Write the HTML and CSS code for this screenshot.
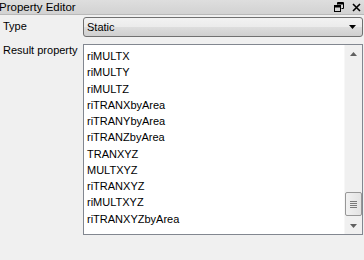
FILE: index.html
```html
<!DOCTYPE html>
<html lang="en">
<head>
    <meta charset="UTF-8">
    <link rel="stylesheet" href="styles.css">
</head>
<body>
    <div class="editor">
        <div class="title-bar">
            <span class="title">Property Editor</span>
            <span class="title-buttons">
                <svg width="10" height="10" viewBox="0 0 10 10">
                    <path d="M3.5 0.5h6v6h-2M3.5 0.5v2" fill="none" stroke="#000" stroke-width="1"/>
                    <rect x="3.5" y="1" width="6" height="1.5" fill="#000"/>
                    <rect x="0.5" y="3.5" width="6" height="6" fill="none" stroke="#000"/>
                    <rect x="0.5" y="4" width="6" height="1.5" fill="#000"/>
                </svg>
                <svg width="9" height="9" viewBox="0 0 9 9">
                    <path d="M1 1L8 8M8 1L1 8" stroke="#000" stroke-width="1.6"/>
                </svg>
            </span>
        </div>

        <div class="form">
            <label class="field-label">Type</label>
            <div class="combo">
                <span>Static</span>
                <svg width="7" height="4" viewBox="0 0 7 4"><path d="M0 0h7L3.5 4z" fill="#000"/></svg>
            </div>

            <label class="field-label">Result property</label>
            <div class="list">
                <ul class="items">
                    <li>riMULTX</li>
                    <li>riMULTY</li>
                    <li>riMULTZ</li>
                    <li>riTRANXbyArea</li>
                    <li>riTRANYbyArea</li>
                    <li>riTRANZbyArea</li>
                    <li>TRANXYZ</li>
                    <li>MULTXYZ</li>
                    <li>riTRANXYZ</li>
                    <li>riMULTXYZ</li>
                    <li>riTRANXYZbyArea</li>
                </ul>
                <div class="scrollbar">
                    <div class="arrow">
                        <svg width="7" height="4" viewBox="0 0 7 4"><path d="M0 4h7L3.5 0z" fill="#606060"/></svg>
                    </div>
                    <div class="track">
                        <div class="thumb">
                            <span></span><span></span><span></span><span></span>
                        </div>
                    </div>
                    <div class="arrow">
                        <svg width="7" height="4" viewBox="0 0 7 4"><path d="M0 0h7L3.5 4z" fill="#606060"/></svg>
                    </div>
                </div>
            </div>
        </div>
    </div>
</body>
</html>
```

FILE: styles.css
```css
html, body {
    margin: 0;
    padding: 0;
    background: #f0f0f0;
}
body {
    width: 364px;
    height: 260px;
    overflow: hidden;
    font-family: "Liberation Sans", Arial, sans-serif;
    font-size: 11px;
    color: #000;
}
.title-bar {
    height: 14px;
    display: flex;
    align-items: center;
    justify-content: space-between;
    background: linear-gradient(#dedede, #d2d2d2);
    border-bottom: 1px solid #b9b9b9;
    padding: 0 3px 0 0;
}
.title {
    font-size: 11.5px;
    margin-left: -1px;
    line-height: 14px;
}
.title-buttons {
    display: flex;
    align-items: center;
    gap: 8px;
}
.form {
    display: grid;
    grid-template-columns: 83px 280px;
    grid-template-rows: 20px 191px;
    row-gap: 7px;
    padding-top: 2px;
}
.field-label {
    padding-left: 3px;
    padding-top: 3px;
}
.form .field-label:nth-of-type(2) {
    padding-top: 0;
}
.combo {
    box-sizing: border-box;
    height: 20px;
    border: 1px solid #707070;
    border-radius: 3px;
    background: linear-gradient(#f2f2f2 0%, #ebebeb 50%, #dddddd 51%, #cfcfcf 100%);
    display: flex;
    align-items: center;
    justify-content: space-between;
    padding: 0 6px 0 3px;
}
.list {
    box-sizing: border-box;
    border: 1px solid #828790;
    background: #fff;
    display: flex;
    height: 191px;
}
.items {
    list-style: none;
    margin: 0;
    padding: 0 0 0 3px;
    flex: 1;
}
.items li {
    height: 16.25px;
    line-height: 16px;
}
.items li:first-child {
    margin-top: 3px;
}
.scrollbar {
    width: 17px;
    display: flex;
    flex-direction: column;
    background: #f0f0f0;
    border-left: 1px solid #f7f7f7;
}
.arrow {
    height: 17px;
    display: flex;
    align-items: center;
    justify-content: center;
}
.track {
    flex: 1;
    display: flex;
    flex-direction: column;
    justify-content: flex-end;
}
.thumb {
    box-sizing: border-box;
    height: 24px;
    margin: 0 0 1px 0;
    border: 1px solid #979797;
    border-radius: 2px;
    background: linear-gradient(90deg, #f1f1f1, #e3e3e3);
    display: flex;
    flex-direction: column;
    align-items: center;
    justify-content: center;
    gap: 1px;
}
.thumb span {
    width: 7px;
    height: 1px;
    background: #7a7a7a;
}
```
